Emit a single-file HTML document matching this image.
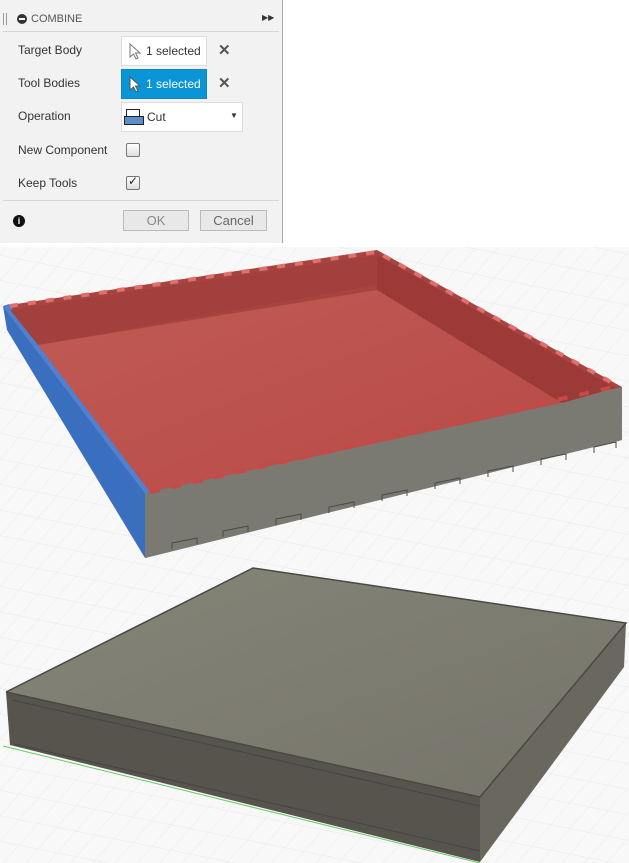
<!DOCTYPE html>
<html><head><style>
body{margin:0;width:629px;height:863px;overflow:hidden;position:relative;background:#fff;font-family:"Liberation Sans",Arial,sans-serif;}
.dlg{position:absolute;left:0;top:0;width:282px;height:243px;background:#f2f2f2;border-right:1px solid #aaa;}
.hdr{position:absolute;left:3px;top:7px;width:276px;height:24px;border-bottom:1px solid #d6d6d6;font-size:11px;color:#555;}
.lbl{position:absolute;left:18px;font-size:12px;color:#333;}
.box{position:absolute;left:121px;width:84px;height:28px;background:#fff;border:1px solid #ddd;font-size:12px;color:#333;}
.x{position:absolute;left:218px;font-size:15px;color:#555;font-weight:bold;}
.cb{position:absolute;left:126px;width:12px;height:12px;border:1px solid #777;border-radius:2px;background:linear-gradient(#fff,#ddd);}
.btn{position:absolute;top:210px;height:19px;border:1px solid #bbb;background:#e8e8e8;color:#888;font-size:13px;text-align:center;line-height:19px;}
</style></head><body>
<svg width="629" height="863" style="position:absolute;left:0;top:0">
<defs>
<pattern id="g" width="22" height="22" patternUnits="userSpaceOnUse" patternTransform="skewX(-35) rotate(10)"><path d="M22 0H0V22" fill="none" stroke="#e9e9e9" stroke-width="1"/></pattern>
<linearGradient id="fl" x1="0" y1="0" x2="1" y2="1"><stop offset="0" stop-color="#c05a55"/><stop offset="1" stop-color="#b84a46"/></linearGradient>
<linearGradient id="tp" x1="0" y1="0" x2="1" y2="1"><stop offset="0" stop-color="#858578"/><stop offset="1" stop-color="#76746a"/></linearGradient>
</defs>
<rect x="0" y="247" width="629" height="616" fill="#f8f8f8"/>
<rect x="0" y="247" width="629" height="616" fill="url(#g)"/>
<rect x="283" y="0" width="346" height="247" fill="#fff"/>
<polygon points="3,306 377,250 622,387 622,440 145,558 145,493" fill="#a84440"/>
<polygon points="145,493 622,387 622,440 145,558" fill="#7a7a72"/>
<polygon points="3,306 145,493 145,558 7,330" fill="#3a6fc0"/>
<polygon points="3,306 9,304 150,492 145,493" fill="#5080d0"/>
<polygon points="10,310 377,255 377,285 38,345" fill="#a2403d"/>
<polygon points="377,255 615,388 562,403 377,290" fill="#9c3a38"/>
<polygon points="38,345 377,290 562,403 150,492" fill="url(#fl)"/>
<polyline points="10,306 377,252 618,386" fill="none" stroke="#e07070" stroke-width="4" stroke-dasharray="8 10"/>
<polyline points="150,492 618,386" fill="none" stroke="#c84848" stroke-width="4" stroke-dasharray="10 12"/>
<g fill="none" stroke="#4a4a44" stroke-width="1">
<path d="M172,549v-6l25,-5v6M223,537v-6l25,-5v6M276,525v-6l25,-5v6M329,513v-6l25,-5v6M382,501v-6l25,-5v6M435,489v-6l25,-5v6M488,477v-6l25,-5v6M541,465v-6l25,-5v6M594,453v-6l22,-5v6"/>
</g>
<polygon points="6,692 253,568 626,623 480,797" fill="url(#tp)"/>
<polygon points="6,692 480,797 480,862 10,745" fill="#57544d"/>
<polygon points="480,797 626,623 624,667 480,862" fill="#6a675f"/>
<polyline points="6,692 253,568 626,623 480,797 6,692" fill="none" stroke="#4a4842" stroke-width="1.5"/>
<polyline points="12,700 480,806" fill="none" stroke="#444" stroke-width="1"/>
<polyline points="14,744 480,851" fill="none" stroke="#444" stroke-width="1"/>
<line x1="3" y1="746" x2="480" y2="863" stroke="#6c6" stroke-width="1"/>
</svg>
<div class="dlg">
<div class="hdr"><span style="position:absolute;left:0;top:6px;width:2px;height:12px;border-left:1px solid #999;border-right:1px solid #999"></span><span style="position:absolute;left:14px;top:7px;width:10px;height:10px;border-radius:50%;background:#333"></span><span style="position:absolute;left:16px;top:11px;width:6px;height:2px;background:#fff"></span><span style="position:absolute;left:28px;top:6px;">COMBINE</span><span style="position:absolute;left:259px;top:6px;font-size:8px;color:#333">▶▶</span></div>
<div class="lbl" style="top:43px">Target Body</div>
<div class="box" style="top:36px"><svg style="position:absolute;left:7px;top:6px" width="12" height="17"><path d="M1 1V14L4.5 11L7 16L9 15L6.5 10H11Z" fill="#fff" stroke="#777"/></svg><span style="position:absolute;left:24px;top:7px">1 selected</span></div>
<div class="x" style="top:41px">✕</div>
<div class="lbl" style="top:76px">Tool Bodies</div>
<div class="box" style="top:69px;background:#0a96d6;border-color:#0a8ac6;color:#fff"><svg style="position:absolute;left:7px;top:6px" width="12" height="17"><path d="M1 1V14L4.5 11L7 16L9 15L6.5 10H11Z" fill="#fff" stroke="#555"/></svg><span style="position:absolute;left:24px;top:7px">1 selected</span></div>
<div class="x" style="top:74px">✕</div>
<div class="lbl" style="top:109px">Operation</div>
<div class="box" style="top:102px;width:120px"><span style="position:absolute;left:4px;top:6px;width:12px;height:9px;border:1px solid #222;background:#fff"></span><span style="position:absolute;left:2px;top:13px;width:18px;height:7px;border:1px solid #222;background:#5b8fc9"></span><span style="position:absolute;left:25px;top:7px">Cut</span><span style="position:absolute;left:108px;top:8px;font-size:8px">▼</span></div>
<div class="lbl" style="top:143px">New Component</div>
<div class="cb" style="top:143px"></div>
<div class="lbl" style="top:176px">Keep Tools</div>
<div class="cb" style="top:176px"><span style="position:absolute;left:1px;top:-3px;font-size:12px;color:#222">✓</span></div>
<div style="position:absolute;left:3px;top:200px;width:276px;border-top:1px solid #d6d6d6"></div>
<div style="position:absolute;left:13px;top:215px;width:12px;height:12px;border-radius:50%;background:#111;color:#fff;font-size:9px;font-weight:bold;text-align:center;line-height:12px">i</div>
<div class="btn" style="left:123px;width:64px">OK</div>
<div class="btn" style="left:200px;width:65px;color:#666">Cancel</div>
</div>
</body></html>
